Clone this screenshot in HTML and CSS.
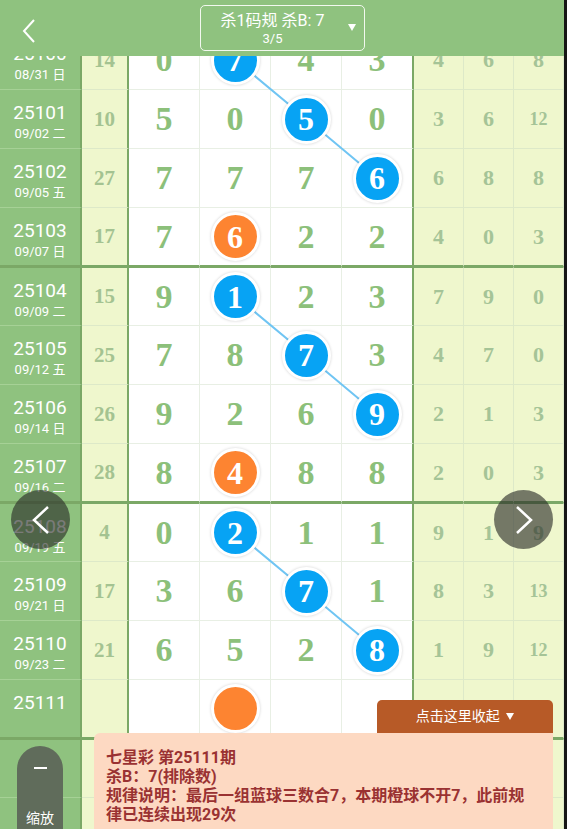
FILE: index.html
```html
<!DOCTYPE html>
<html lang="zh-CN">
<head>
    <meta charset="UTF-8">
    <meta name="viewport" content="width=device-width, initial-scale=1.0">
    <title>七星彩 杀码规律</title>
    <link rel="stylesheet" href="styles.css">
</head>
<body>
    <div id="app">
        <div id="topbar">
            <div class="back">
                <svg width="14" height="24" viewBox="0 0 14 24"><polyline points="12,1 2,12 12,23" fill="none" stroke="#fff" stroke-width="2"/></svg>
            </div>
            <div class="title-box">
                <div class="title-text">
                    <div class="title-main">杀1码规 杀B: 7</div>
                    <div class="title-sub">3/5</div>
                </div>
                <span class="caret"></span>
            </div>
            <div></div>
        </div>

        <div id="board">
            <div id="table">
                <!-- connecting lines between the blue balls of each group -->
                <svg class="links" width="564" height="826" viewBox="0 0 564 826">
                    <polyline points="235.5,29 306.5,88 377,147" />
                    <polyline points="235.5,265 306.5,324 377,383" />
                    <polyline points="235.5,501 306.5,560 377,619" />
                </svg>

                <div class="row">
                    <div class="cell date"><span class="issue">25100</span><span class="day">08/31 日</span></div>
                    <div class="cell sum">14</div>
                    <div class="cell num">0</div>
                    <div class="cell num"><span class="ball blue">7</span></div>
                    <div class="cell num">4</div>
                    <div class="cell num last">3</div>
                    <div class="cell side">4</div>
                    <div class="cell side">6</div>
                    <div class="cell side">8</div>
                </div>
                <div class="row">
                    <div class="cell date"><span class="issue">25101</span><span class="day">09/02 二</span></div>
                    <div class="cell sum">10</div>
                    <div class="cell num">5</div>
                    <div class="cell num">0</div>
                    <div class="cell num"><span class="ball blue">5</span></div>
                    <div class="cell num last">0</div>
                    <div class="cell side">3</div>
                    <div class="cell side">6</div>
                    <div class="cell side small">12</div>
                </div>
                <div class="row">
                    <div class="cell date"><span class="issue">25102</span><span class="day">09/05 五</span></div>
                    <div class="cell sum">27</div>
                    <div class="cell num">7</div>
                    <div class="cell num">7</div>
                    <div class="cell num">7</div>
                    <div class="cell num last"><span class="ball blue">6</span></div>
                    <div class="cell side">6</div>
                    <div class="cell side">8</div>
                    <div class="cell side">8</div>
                </div>
                <div class="row group-end">
                    <div class="cell date"><span class="issue">25103</span><span class="day">09/07 日</span></div>
                    <div class="cell sum">17</div>
                    <div class="cell num">7</div>
                    <div class="cell num"><span class="ball orange">6</span></div>
                    <div class="cell num">2</div>
                    <div class="cell num last">2</div>
                    <div class="cell side">4</div>
                    <div class="cell side">0</div>
                    <div class="cell side">3</div>
                </div>

                <div class="row group-start">
                    <div class="cell date"><span class="issue">25104</span><span class="day">09/09 二</span></div>
                    <div class="cell sum">15</div>
                    <div class="cell num">9</div>
                    <div class="cell num"><span class="ball blue">1</span></div>
                    <div class="cell num">2</div>
                    <div class="cell num last">3</div>
                    <div class="cell side">7</div>
                    <div class="cell side">9</div>
                    <div class="cell side">0</div>
                </div>
                <div class="row">
                    <div class="cell date"><span class="issue">25105</span><span class="day">09/12 五</span></div>
                    <div class="cell sum">25</div>
                    <div class="cell num">7</div>
                    <div class="cell num">8</div>
                    <div class="cell num"><span class="ball blue">7</span></div>
                    <div class="cell num last">3</div>
                    <div class="cell side">4</div>
                    <div class="cell side">7</div>
                    <div class="cell side">0</div>
                </div>
                <div class="row">
                    <div class="cell date"><span class="issue">25106</span><span class="day">09/14 日</span></div>
                    <div class="cell sum">26</div>
                    <div class="cell num">9</div>
                    <div class="cell num">2</div>
                    <div class="cell num">6</div>
                    <div class="cell num last"><span class="ball blue">9</span></div>
                    <div class="cell side">2</div>
                    <div class="cell side">1</div>
                    <div class="cell side">3</div>
                </div>
                <div class="row group-end">
                    <div class="cell date"><span class="issue">25107</span><span class="day">09/16 二</span></div>
                    <div class="cell sum">28</div>
                    <div class="cell num">8</div>
                    <div class="cell num"><span class="ball orange">4</span></div>
                    <div class="cell num">8</div>
                    <div class="cell num last">8</div>
                    <div class="cell side">2</div>
                    <div class="cell side">0</div>
                    <div class="cell side">3</div>
                </div>

                <div class="row group-start">
                    <div class="cell date"><span class="issue">25108</span><span class="day">09/19 五</span></div>
                    <div class="cell sum">4</div>
                    <div class="cell num">0</div>
                    <div class="cell num"><span class="ball blue">2</span></div>
                    <div class="cell num">1</div>
                    <div class="cell num last">1</div>
                    <div class="cell side">9</div>
                    <div class="cell side">1</div>
                    <div class="cell side">9</div>
                </div>
                <div class="row">
                    <div class="cell date"><span class="issue">25109</span><span class="day">09/21 日</span></div>
                    <div class="cell sum">17</div>
                    <div class="cell num">3</div>
                    <div class="cell num">6</div>
                    <div class="cell num"><span class="ball blue">7</span></div>
                    <div class="cell num last">1</div>
                    <div class="cell side">8</div>
                    <div class="cell side">3</div>
                    <div class="cell side small">13</div>
                </div>
                <div class="row">
                    <div class="cell date"><span class="issue">25110</span><span class="day">09/23 二</span></div>
                    <div class="cell sum">21</div>
                    <div class="cell num">6</div>
                    <div class="cell num">5</div>
                    <div class="cell num">2</div>
                    <div class="cell num last"><span class="ball blue">8</span></div>
                    <div class="cell side">1</div>
                    <div class="cell side">9</div>
                    <div class="cell side small">12</div>
                </div>
                <div class="row group-end">
                    <div class="cell date"><span class="issue">25111</span><span class="day"></span></div>
                    <div class="cell sum"></div>
                    <div class="cell num"></div>
                    <div class="cell num"><span class="ball orange"></span></div>
                    <div class="cell num"></div>
                    <div class="cell num last"></div>
                    <div class="cell side"></div>
                    <div class="cell side"></div>
                    <div class="cell side"></div>
                </div>

                <div class="row group-start">
                    <div class="cell date"></div>
                    <div class="cell sum"></div>
                    <div class="cell num"></div>
                    <div class="cell num"></div>
                    <div class="cell num"></div>
                    <div class="cell num last"></div>
                    <div class="cell side"></div>
                    <div class="cell side"></div>
                    <div class="cell side"></div>
                </div>
                <div class="row">
                    <div class="cell date"></div>
                    <div class="cell sum"></div>
                    <div class="cell num"></div>
                    <div class="cell num"></div>
                    <div class="cell num"></div>
                    <div class="cell num last"></div>
                    <div class="cell side"></div>
                    <div class="cell side"></div>
                    <div class="cell side"></div>
                </div>
            </div>
        </div>

        <div class="nav prev">
            <svg width="18" height="28" viewBox="0 0 18 28"><polyline points="16,1 2,14 16,27" fill="none" stroke="#fff" stroke-width="2.5"/></svg>
        </div>
        <div class="nav next">
            <svg width="18" height="28" viewBox="0 0 18 28"><polyline points="2,1 16,14 2,27" fill="none" stroke="#fff" stroke-width="2.5"/></svg>
        </div>

        <div id="zoom-button">
            <span class="minus"></span>
            <span class="zoom-label">缩放</span>
        </div>

        <div id="info-panel">
            <div class="fold-tab">点击这里收起 <span class="caret"></span></div>
            <div class="info-text">
                <div>七星彩 第25111期</div>
                <div>杀B：7(排除数)</div>
                <div>规律说明：最后一组蓝球三数合7，本期橙球不开7，此前规律已连续出现29次</div>
            </div>
        </div>
    </div>
</body>
</html>
```

FILE: styles.css
```css
body {
    margin: 0;
    padding: 0;
    background-color: #161616;
    font-family: Roboto, "Noto Sans CJK SC", sans-serif;
    overflow: hidden;
}

#app {
    position: relative;
    width: 564px;
    height: 829px;
    display: flex;
    flex-direction: column;
    overflow: hidden;
    background-color: #fff;
}

/* top bar */

#topbar {
    flex: none;
    height: 56px;
    background-color: #8fc27f;
    display: grid;
    grid-template-columns: 1fr auto 1fr;
    align-items: start;
    color: #fff;
}

.back {
    padding: 19px 0 0 22px;
}

.title-box {
    margin-top: 5px;
    width: 165px;
    height: 46px;
    box-sizing: border-box;
    border: 1px solid #f2f8ef;
    border-radius: 5px;
    padding: 0 8px 0 12px;
    display: flex;
    align-items: center;
}

.title-text {
    width: 121px;
    text-align: center;
}

.title-main {
    font-size: 16px;
    line-height: 20px;
    white-space: nowrap;
}

.title-sub {
    font-size: 13px;
    line-height: 15px;
}

.caret {
    display: inline-block;
    width: 0;
    height: 0;
    border-left: 4px solid transparent;
    border-right: 4px solid transparent;
    border-top: 7px solid #fff;
}

.title-box .caret {
    margin-left: 15px;
    margin-top: -2px;
}

/* grid */

#board {
    flex: 1;
    overflow: hidden;
}

#table {
    position: relative;
    margin-top: -25px;
}

.links {
    position: absolute;
    top: 0;
    left: 0;
    z-index: 1;
}

.links polyline {
    fill: none;
    stroke: #70c5f3;
    stroke-width: 2;
}

.row {
    display: grid;
    grid-template-columns: 82px 47px 71px 71px 71px 72px 50px 50px 50px;
    height: 59px;
}

.cell {
    box-sizing: border-box;
    display: flex;
    align-items: center;
    justify-content: center;
    border-bottom: 1px solid #e8efe4;
    border-right: 1px solid #e8efe4;
    font-family: "Liberation Serif", serif;
    font-weight: bold;
}

.date {
    flex-direction: column;
    padding-top: 9px;
    background-color: #8fc27f;
    border-right: 2px solid #7ba866;
    border-bottom-color: #a6d196;
    font-family: Roboto, "Noto Sans CJK SC", sans-serif;
    font-weight: normal;
    color: #fff;
}

.issue {
    font-size: 19px;
    line-height: 22px;
    margin-top: -3px;
}

.day {
    font-size: 13px;
    line-height: 16px;
    height: 16px;
    margin-top: 2px;
}

.sum {
    background-color: #eff7cd;
    border-right: 2px solid #7ba866;
    border-bottom-color: #dde9c8;
    color: #a4c391;
    font-size: 21px;
}

.num {
    color: #8cc07a;
    font-size: 34px;
}

.num.last {
    border-right: 2px solid #7ba866;
}

.side {
    background-color: #eff7cd;
    border-bottom-color: #dde9c8;
    border-right-color: #dde9c8;
    color: #a5c497;
    font-size: 22px;
}

.side.small {
    font-size: 18px;
}

.group-end .cell {
    border-bottom: 2px solid #7ba866;
}

.group-start .cell {
    border-top: 1px solid #7ba866;
}

.ball {
    position: relative;
    z-index: 2;
    width: 43px;
    height: 43px;
    border: 3px solid #fff;
    border-radius: 50%;
    box-shadow: 0 0 3px rgba(0, 0, 0, 0.18);
    display: flex;
    align-items: center;
    justify-content: center;
    color: #fff;
    font-size: 32px;
    line-height: 1;
}

.ball.blue {
    background-color: #07a3f4;
}

.ball.orange {
    background-color: #fd8431;
}

/* overlays */

.nav {
    position: absolute;
    top: 490px;
    width: 59px;
    height: 59px;
    border-radius: 50%;
    background-color: rgba(40, 42, 38, 0.62);
    display: flex;
    align-items: center;
    justify-content: center;
    z-index: 5;
}

.nav.prev {
    left: 11px;
}

.nav.next {
    left: 494px;
}

#zoom-button {
    position: absolute;
    left: 17px;
    top: 746px;
    width: 46px;
    height: 110px;
    border-radius: 23px;
    background-color: #606c5b;
    display: flex;
    flex-direction: column;
    align-items: center;
    color: #fff;
    z-index: 5;
}

.minus {
    width: 13px;
    height: 2px;
    background-color: #fff;
    margin-top: 21px;
}

.zoom-label {
    font-size: 14px;
    line-height: 18px;
    margin-top: 40px;
}

#info-panel {
    position: absolute;
    left: 94px;
    top: 733px;
    width: 459px;
    height: 110px;
    box-sizing: border-box;
    background-color: #fdd9c2;
    border-top-left-radius: 6px;
    padding: 15px 22px 0 12px;
    z-index: 6;
}

.fold-tab {
    position: absolute;
    right: 0;
    top: -33px;
    width: 176px;
    height: 33px;
    background-color: #b75a27;
    border-radius: 5px 5px 0 0;
    color: #fff;
    font-size: 14px;
    line-height: 33px;
    text-align: center;
}

.fold-tab .caret {
    margin-left: 3px;
    vertical-align: 1px;
}

.info-text {
    color: #9a3232;
    font-size: 16px;
    font-weight: bold;
    line-height: 19px;
}
```
